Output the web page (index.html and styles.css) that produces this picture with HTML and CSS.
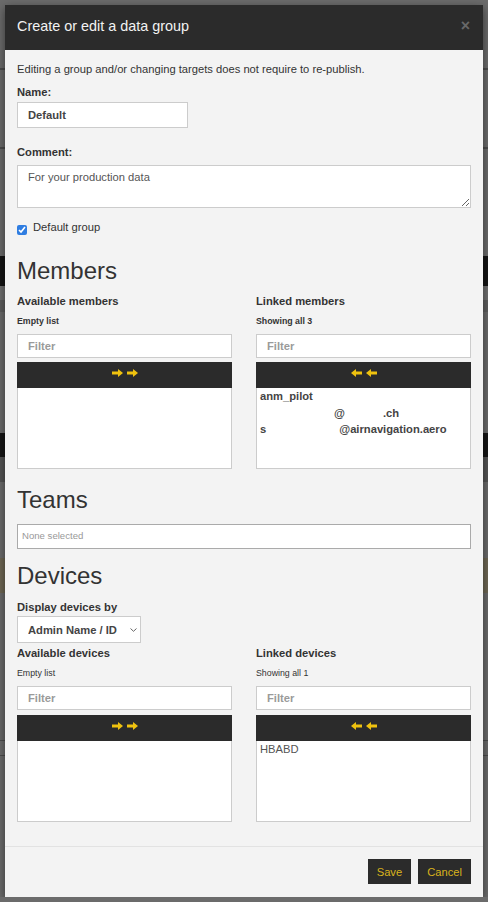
FILE: index.html
```html
<!DOCTYPE html>
<html lang="en">
<head>
<meta charset="utf-8">
<title>Create or edit a data group</title>
<link rel="stylesheet" href="styles.css">
</head>
<body>
<div class="modal">
  <div class="modal-header">
    <h4 class="modal-title">Create or edit a data group</h4>
    <span class="close">&times;</span>
  </div>
  <div class="modal-body">
    <p class="intro">Editing a group and/or changing targets does not require to re-publish.</p>
    <label class="lbl lbl-name">Name:</label>
    <input class="txt name-input" type="text" value="Default">
    <label class="lbl lbl-comment">Comment:</label>
    <textarea class="txt comment">For your production data</textarea>
    <label class="check-row"><input class="check" type="checkbox" checked><span>Default group</span></label>

    <h2 class="section section-members">Members</h2>
    <div class="dual">
      <div class="col">
        <div class="col-title">Available members</div>
        <div class="count count-bold">Empty list</div>
        <input class="filter" type="text" placeholder="Filter">
        <div class="bar">
          <svg class="arrows" width="26" height="8" viewBox="0 0 26 8"><path d="M0 2.6H6V0L11 4L6 8V5.4H0Z"/><path d="M15 2.6H21V0L26 4L21 8V5.4H15Z"/></svg>
        </div>
        <div class="list"></div>
      </div>
      <div class="col">
        <div class="col-title">Linked members</div>
        <div class="count count-bold">Showing all 3</div>
        <input class="filter" type="text" placeholder="Filter">
        <div class="bar">
          <svg class="arrows" width="26" height="8" viewBox="0 0 26 8"><path d="M11 2.6H5V0L0 4L5 8V5.4H11Z"/><path d="M26 2.6H20V0L15 4L20 8V5.4H26Z"/></svg>
        </div>
        <div class="list">
          <div class="item">anm_pilot</div>
          <div class="item"><span class="blank b-74"></span>@<span class="blank b-38"></span>.ch</div>
          <div class="item">s<span class="blank b-73"></span>@airnavigation.aero</div>
        </div>
      </div>
    </div>

    <h2 class="section section-teams">Teams</h2>
    <div class="multiselect">None selected</div>

    <h2 class="section section-devices">Devices</h2>
    <label class="lbl lbl-display">Display devices by</label>
    <div class="select-wrap">
      <select class="select">
        <option>Admin Name / ID</option>
      </select>
      <svg class="chev" width="7" height="4" viewBox="0 0 7 4"><path d="M0.5 0.5L3.5 3.3L6.5 0.5"/></svg>
    </div>
    <div class="dual dual-devices">
      <div class="col">
        <div class="col-title">Available devices</div>
        <div class="count">Empty list</div>
        <input class="filter" type="text" placeholder="Filter">
        <div class="bar bar-devices">
          <svg class="arrows" width="26" height="8" viewBox="0 0 26 8"><path d="M0 2.6H6V0L11 4L6 8V5.4H0Z"/><path d="M15 2.6H21V0L26 4L21 8V5.4H15Z"/></svg>
        </div>
        <div class="list"></div>
      </div>
      <div class="col">
        <div class="col-title">Linked devices</div>
        <div class="count">Showing all 1</div>
        <input class="filter" type="text" placeholder="Filter">
        <div class="bar bar-devices">
          <svg class="arrows" width="26" height="8" viewBox="0 0 26 8"><path d="M11 2.6H5V0L0 4L5 8V5.4H11Z"/><path d="M26 2.6H20V0L15 4L20 8V5.4H26Z"/></svg>
        </div>
        <div class="list">
          <div class="item item-device">HBABD</div>
        </div>
      </div>
    </div>
  </div>
  <div class="modal-footer">
    <button class="btn">Save</button>
    <button class="btn">Cancel</button>
  </div>
</div>
</body>
</html>
```

FILE: styles.css
```css
html {
  height: 100%;
  background: linear-gradient(to bottom,
    #6b6b6b 0, #6b6b6b 68px, #4c4c4c 68px, #4c4c4c 70px,
    #6b6b6b 70px, #6b6b6b 147px, #4c4c4c 147px, #4c4c4c 149px,
    #6b6b6b 149px, #6b6b6b 256px, #151515 256px, #151515 286px,
    #707070 286px, #707070 300px, #5e5e5e 300px, #5e5e5e 312px,
    #6b6b6b 312px, #6b6b6b 433px, #161616 433px, #161616 457px,
    #545454 457px, #545454 482px, #6b6b6b 482px, #6b6b6b 558px,
    #6e6754 558px, #6e6754 593px, #6b6b6b 593px, #6b6b6b 740px,
    #4c4c4c 740px, #4c4c4c 741px, #6b6b6b 741px, #6b6b6b 755px,
    #4c4c4c 755px, #4c4c4c 756px, #6b6b6b 756px, #6b6b6b 902px);
}

body {
  margin: 0;
  font-family: "Liberation Sans", Arial, sans-serif;
  font-size: 11.2px;
  line-height: 16px;
  color: #333;
}

.modal {
  width: 478px;
  margin: 5px 0 0 5px;
  background: #f3f3f3;
  box-shadow: 0 3px 9px rgba(0, 0, 0, 0.5);
}

.modal-header {
  display: flex;
  justify-content: space-between;
  align-items: flex-start;
  height: 45px;
  box-sizing: border-box;
  padding: 11px 12px 14px 12px;
  background: #2b2b2b;
}

.modal-title {
  margin: 0;
  font-size: 14.4px;
  line-height: 20px;
  font-weight: normal;
  color: #f2f2f2;
}

.close {
  font-size: 16px;
  font-weight: bold;
  line-height: 16px;
  color: #686868;
  margin-top: 2px;
  margin-right: 1px;
}

.modal-body {
  padding: 11px 12px 24px 12px;
  display: flex;
  flex-direction: column;
  align-items: flex-start;
}

.intro {
  margin: 0;
}

.lbl {
  display: block;
  font-weight: bold;
}

.lbl-name { margin-top: 7px; }
.lbl-comment { margin-top: 16px; }
.lbl-display { margin-top: 10px; }

.txt {
  box-sizing: border-box;
  border: 1px solid #ccc;
  background: #fff;
  font-family: "Liberation Sans", Arial, sans-serif;
  font-size: 11.2px;
  outline: none;
}

.name-input {
  margin-top: 2px;
  width: 171px;
  height: 26px;
  padding: 0 10px;
  font-weight: bold;
  color: #444;
}

.comment {
  margin-top: 5px;
  width: 454px;
  height: 43px;
  padding: 3px 10px;
  line-height: 16px;
  color: #555;
  display: block;
}

.check-row {
  display: flex;
  align-items: flex-start;
  margin-top: 11px;
  gap: 6px;
}

.check {
  margin: 6px 0 0 0;
  width: 10px;
  height: 10px;
  accent-color: #2f7de1;
}

.section {
  margin: 0;
  font-size: 24px;
  line-height: 26px;
  font-weight: normal;
  color: #333;
}

.section-members { margin-top: 23px; }
.section-teams { margin-top: 18px; }
.section-devices { margin-top: 14px; }

.dual {
  display: grid;
  grid-template-columns: 215px 215px;
  column-gap: 24px;
  margin-top: 9px;
  width: 454px;
}

.dual-devices {
  margin-top: 2px;
}

.col {
  display: flex;
  flex-direction: column;
}

.col-title {
  font-weight: bold;
}

.count {
  margin-top: 6px;
  font-size: 8.8px;
  line-height: 13px;
  color: #333;
}

.count-bold {
  font-weight: bold;
}

.filter {
  margin-top: 6px;
  box-sizing: border-box;
  height: 24px;
  width: 215px;
  border: 1px solid #ccc;
  background: #fff;
  padding: 0 10px;
  font-family: "Liberation Sans", Arial, sans-serif;
  font-size: 11.2px;
  font-weight: bold;
  outline: none;
}

.filter::placeholder {
  color: #9a9a9a;
}

.bar {
  margin-top: 4px;
  height: 26px;
  background: #2b2b2b;
  display: flex;
  justify-content: center;
  align-items: flex-start;
}

.bar-devices {
  margin-top: 5px;
}

.arrows {
  margin-top: 7px;
  fill: #efc20f;
}

.list {
  box-sizing: border-box;
  height: 81px;
  background: #fff;
  border: 1px solid #ccc;
  border-top: 0;
  padding: 0 3px;
}

.item {
  font-weight: bold;
  line-height: 16.5px;
  color: #444;
  white-space: nowrap;
}

.item-device {
  font-weight: normal;
  line-height: 16px;
  color: #555;
}

.blank {
  display: inline-block;
}

.b-74 { width: 74px; }
.b-38 { width: 38px; }
.b-73 { width: 73px; }

.multiselect {
  margin-top: 11px;
  box-sizing: border-box;
  width: 454px;
  height: 25px;
  border: 1px solid #aaa;
  background: #fff;
  padding: 4px 4px 0 4px;
  font-size: 9.6px;
  line-height: 14px;
  color: #999;
}

.select-wrap {
  position: relative;
  margin-top: 1px;
}

.select {
  appearance: none;
  -webkit-appearance: none;
  box-sizing: border-box;
  width: 124px;
  height: 27px;
  border: 1px solid #ccc;
  border-radius: 0;
  background: #fff;
  padding: 0 10px;
  font-family: "Liberation Sans", Arial, sans-serif;
  font-size: 11.2px;
  font-weight: bold;
  color: #444;
  outline: none;
}

.chev {
  position: absolute;
  left: 113px;
  top: 12px;
  fill: none;
  stroke: #666;
  stroke-width: 1;
}

.modal-footer {
  border-top: 1px solid #e2e2e2;
  padding: 12px 12px 13px 12px;
  display: flex;
  justify-content: flex-end;
  gap: 7px;
}

.btn {
  height: 25px;
  border: 0;
  border-radius: 0;
  background: #2b2b2b;
  color: #d9b31c;
  font-family: "Liberation Sans", Arial, sans-serif;
  font-size: 11.2px;
  padding: 0 9px;
}
```
